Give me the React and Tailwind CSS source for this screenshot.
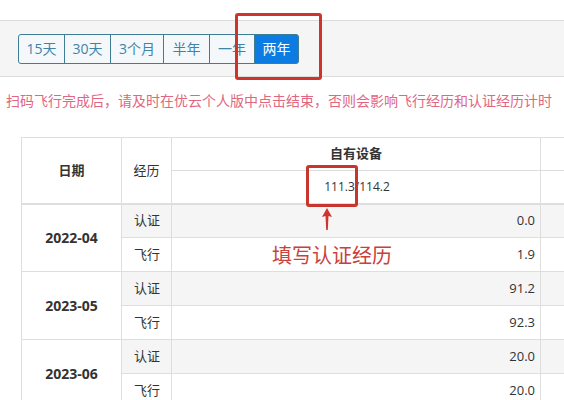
const ranges = [
  { label: "15天", w: "w-[47px]" },
  { label: "30天", w: "w-[47px]" },
  { label: "3个月", w: "w-[54px]" },
  { label: "半年", w: "w-[47px]" },
  { label: "一年", w: "w-[46px]" },
  { label: "两年", w: "w-[45px]", active: true },
];

const rows = [
  { month: "2022-04", cert: "0.0", fly: "1.9" },
  { month: "2023-05", cert: "91.2", fly: "92.3" },
  { month: "2023-06", cert: "20.0", fly: "20.0" },
];

export default function App() {
  return (
    <div
      className="relative h-[400px] w-[564px] overflow-hidden bg-white text-[#333]"
      style={{ fontFamily: '"Open Sans", "Noto Sans CJK SC", sans-serif' }}
    >
      <div className="h-[20px]" />
      <div className="flex h-[57px] items-center border-y border-[#dcdcdc] bg-[#f5f5f5] pl-[18px]">
        <div className="flex h-[30px]">
          {ranges.map((r, i) => (
            <button
              key={r.label}
              className={
                r.w +
                " flex h-[30px] items-center justify-center border border-[#3f7d94] text-[14px] " +
                (i > 0 ? "-ml-px " : "rounded-l-[3px] ") +
                (r.active
                  ? "rounded-r-[3px] border-[#0c7be2] bg-[#0c7be2] text-white"
                  : "bg-[#f4f8fa] text-[#3d84ab]")
              }
            >
              {r.label}
            </button>
          ))}
        </div>
      </div>

      <p className="mt-[14px] pl-[6px] text-[14px] leading-[20px] whitespace-nowrap text-[#df6782]">
        扫码飞行完成后，请及时在优云个人版中点击结束，否则会影响飞行经历和认证经历计时
      </p>

      <div className="mt-[26px] pl-[21px]">
        <table className="w-[640px] table-fixed border-collapse text-[13px]">
          <colgroup>
            <col className="w-[100px]" />
            <col className="w-[50px]" />
            <col className="w-[369px]" />
            <col className="w-[121px]" />
          </colgroup>
          <thead>
            <tr className="h-[33px]">
              <th rowSpan={2} className="border border-b-2 border-[#dedede] font-bold">日期</th>
              <th rowSpan={2} className="border border-b-2 border-[#dedede] font-normal">经历</th>
              <th className="border border-[#dedede] font-bold">自有设备</th>
              <th className="border border-[#dedede]" />
            </tr>
            <tr className="h-[33px]">
              <th className="border border-b-2 border-[#dedede] pl-[2px] text-[12px] font-normal">111.3/114.2</th>
              <th className="border border-b-2 border-[#dedede]" />
            </tr>
          </thead>
          <tbody>
            {rows.map((r) => (
              <>
                <tr key={r.month + "c"} className="h-[34px]">
                  <td rowSpan={2} className="border border-[#dedede] text-center text-[14px] font-bold">{r.month}</td>
                  <td className="border border-[#dedede] bg-[#f5f5f5] pl-[12px]">认证</td>
                  <td className="border border-[#dedede] bg-[#f5f5f5] pr-[5px] text-right">{r.cert}</td>
                  <td className="border border-[#dedede] bg-[#f5f5f5]" />
                </tr>
                <tr key={r.month + "f"} className="h-[34px]">
                  <td className="border border-[#dedede] pl-[12px]">飞行</td>
                  <td className="border border-[#dedede] pr-[5px] text-right">{r.fly}</td>
                  <td className="border border-[#dedede]" />
                </tr>
              </>
            ))}
          </tbody>
        </table>
      </div>

      <div className="absolute left-[235px] top-[13px] h-[67px] w-[87px] rounded-[3px] border-[3px] border-[#d0322c]" />
      <div className="absolute left-[306px] top-[165px] h-[42px] w-[52px] rounded-[3px] border-[3px] border-[#c8352e]" />
      <svg className="absolute left-[321px] top-[207px]" width="12" height="24" viewBox="0 0 12 24">
        <path d="M6 1 L11 10 L7.5 9 L6.8 23 L5.2 23 L4.5 9 L1 10 Z" fill="#d0322c" />
      </svg>
      <div className="absolute left-[272px] top-[242px] text-[20px] leading-[28px] text-[#c9413b]">
        填写认证经历
      </div>
    </div>
  );
}
